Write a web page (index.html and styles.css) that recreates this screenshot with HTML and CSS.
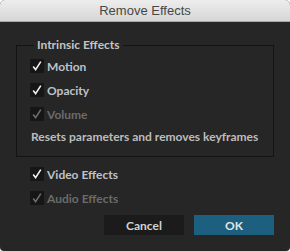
FILE: index.html
```html
<!DOCTYPE html>
<html lang="en">
<head>
	<meta charset="UTF-8">
	<title>Remove Effects</title>
	<link rel="stylesheet" href="styles.css">
</head>
<body>
	<div class="window">
		<div class="titlebar">Remove Effects</div>
		<div class="content">
			<fieldset class="group">
				<legend>Intrinsic Effects</legend>
				<div class="row"><span class="box"><svg viewBox="0 0 14 14"><path d="M3.2 7.6 L5.6 10.6 L10.8 2.6"/></svg></span>Motion</div>
				<div class="row"><span class="box"><svg viewBox="0 0 14 14"><path d="M3.2 7.6 L5.6 10.6 L10.8 2.6"/></svg></span>Opacity</div>
				<div class="row off"><span class="box"><svg viewBox="0 0 14 14"><path d="M3.2 7.6 L5.6 10.6 L10.8 2.6"/></svg></span>Volume</div>
				<div class="note">Resets parameters and removes keyframes</div>
			</fieldset>
			<div class="row out"><span class="box"><svg viewBox="0 0 14 14"><path d="M3.2 7.6 L5.6 10.6 L10.8 2.6"/></svg></span>Video Effects</div>
			<div class="row out off"><span class="box"><svg viewBox="0 0 14 14"><path d="M3.2 7.6 L5.6 10.6 L10.8 2.6"/></svg></span>Audio Effects</div>
			<div class="buttons">
				<button class="btn">Cancel</button>
				<button class="btn primary">OK</button>
			</div>
		</div>
	</div>
</body>
</html>
```

FILE: styles.css
```css
*{margin: 0; padding: 0; box-sizing: border-box;}
body{background: #fff; font-family: Lato, "DejaVu Sans", sans-serif;}

.window{width: 290px; height: 251px; background: #262626; border-radius: 5px 5px 4px 4px; overflow: hidden;}
.titlebar{height: 22px; line-height: 21px; text-align: center; font-family: "Liberation Sans", Arial, sans-serif; font-size: 13px; color: #474747; background: linear-gradient(#ededed, #d6d6d6); border-bottom: 1px solid #a8a8a8;}

.content{padding: 16px 16px 0 16px;}
.group{border: 1px solid #141414; padding: 2px 0 8px 13px;}
.group legend{margin-left: 4px; padding: 0 3px; line-height: 14px; font-size: 12px; font-weight: 700; color: #c4c4c4;}

.row{display: flex; align-items: center; height: 24px; font-size: 12px; font-weight: 700; color: #bfc2c9;}
.row .box{width: 14px; height: 14px; margin-right: 3px; background: #161616;}
.row svg{display: block; width: 14px; height: 14px; fill: none; stroke: #f2f2f2; stroke-width: 1.6;}
.row.off{color: #6b6b6b;}
.row.off svg{stroke: #6e6e6e;}
.row.out{padding-left: 14px;}
.row.out:first-of-type{margin-top: 5px;}

.note{height: 22px; line-height: 22px; padding-left: 1px; font-size: 12px; font-weight: 700; color: #bdbdbd;}

.buttons{display: flex; justify-content: flex-end; gap: 10px; margin-top: 5px;}
.btn{width: 80px; height: 20px; border: none; background: #1b1b1b; color: #d2d2d2; font-family: Lato, sans-serif; font-size: 12px; font-weight: 700;}
.btn.primary{background: #1c5f7f; color: #e4e4e4;}
```
